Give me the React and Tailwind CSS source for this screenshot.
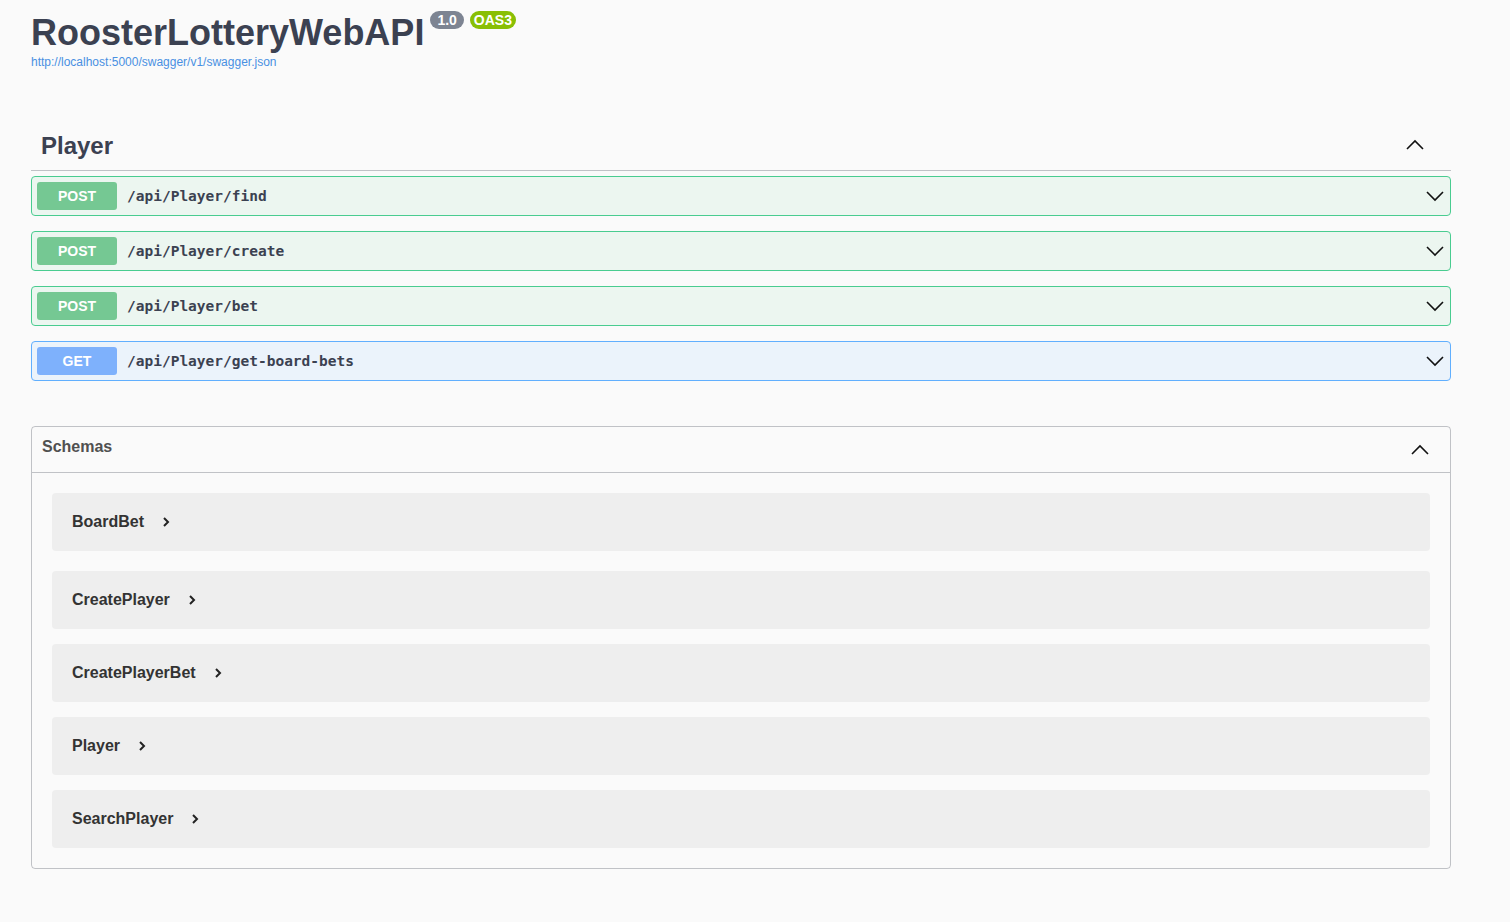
import React from "react";

const ChevUp = ({ className = "" }) => (
  <svg width="20" height="20" viewBox="0 0 20 20" className={className} fill="none">
    <polyline points="2,14 10,6 18,14" stroke="#111" strokeWidth="1.6" />
  </svg>
);
const ChevDown = ({ className = "" }) => (
  <svg width="20" height="20" viewBox="0 0 20 20" className={className} fill="none">
    <polyline points="2,6 10,14 18,6" stroke="#111" strokeWidth="1.6" />
  </svg>
);
const ChevRight = () => (
  <svg width="10" height="12" viewBox="0 0 10 12" fill="none">
    <polyline points="3,2 7,6 3,10" stroke="#222" strokeWidth="2" />
  </svg>
);

const ops = [
  { m: "POST", p: "/api/Player/find" },
  { m: "POST", p: "/api/Player/create" },
  { m: "POST", p: "/api/Player/bet" },
  { m: "GET", p: "/api/Player/get-board-bets" },
];

const schemas = ["BoardBet", "CreatePlayer", "CreatePlayerBet", "Player", "SearchPlayer"];

export default function App() {
  return (
    <div className="min-h-screen bg-[#fafafa] font-['Liberation_Sans',Arial,sans-serif] text-[#3b4151]">
      <div className="ml-[31px] w-[1420px]">
        <div className="pt-[12px]">
          <h2 className="flex items-start text-[36px] leading-[41px] font-bold text-[#3b4151]">
            <span>RoosterLotteryWebAPI</span>
            <span className="ml-[6px] mt-[-1px] flex gap-[6px]">
              <span className="rounded-full bg-[#7d8492] px-[7px] text-[14px] leading-[18px] font-bold text-white">1.0</span>
              <span className="rounded-full bg-[#89bf04] px-[4px] text-[14px] leading-[18px] font-bold text-white">OAS3</span>
            </span>
          </h2>
          <a className="block mt-[2px] text-[12px] leading-[14px] text-[#4990e2]">http://localhost:5000/swagger/v1/swagger.json</a>
        </div>

        <div className="mt-[52px]">
          <div className="flex h-[50px] items-center justify-between border-b border-[#3b41514d] pl-[10px] pr-[26px]">
            <h3 className="text-[24px] font-bold text-[#3b4151]">Player</h3>
            <ChevUp className="mt-[-2px]" />
          </div>
          <div className="mt-[5px] flex flex-col gap-[15px]">
            {ops.map((o) => {
              const post = o.m === "POST";
              return (
                <div
                  key={o.p}
                  className={
                    "flex h-[40px] items-center rounded-[4px] border px-[5px] " +
                    (post ? "border-[#49cc90] bg-[#ecf6f0]" : "border-[#61affe] bg-[#ebf3fb]")
                  }
                >
                  <span
                    className={
                      "flex h-[28px] w-[80px] items-center justify-center rounded-[3px] text-[14px] font-bold text-white " +
                      (post ? "bg-[#75c893]" : "bg-[#7eb1fc]")
                    }
                  >
                    {o.m}
                  </span>
                  <span className="ml-[10px] mt-[1px] flex-1 font-['DejaVu_Sans_Mono',monospace] text-[14.5px] font-bold text-[#3b4151]">
                    {o.p}
                  </span>
                  <ChevDown />
                </div>
              );
            })}
          </div>
        </div>

        <div className="mt-[45px] rounded-[4px] border border-[#3b41514d]">
          <div className="flex h-[46px] items-center justify-between border-b border-[#3b41514d] pl-[10px] pr-[20px]">
            <h4 className="mb-[5px] text-[16px] font-bold text-[#505050]">Schemas</h4>
            <ChevUp />
          </div>
          <div className="px-[20px] py-[20px]">
            {schemas.map((s, i) => (
              <div
                key={s}
                className={
                  "flex h-[58px] items-center rounded-[4px] bg-[#eeeeee] pl-[20px] " +
                  (i === 0 ? "mb-[20px]" : i < schemas.length - 1 ? "mb-[15px]" : "")
                }
              >
                <span className="text-[16px] font-bold text-[#333]">{s}</span>
                <span className="ml-[17px] flex items-center"><ChevRight /></span>
              </div>
            ))}
          </div>
        </div>
      </div>
    </div>
  );
}
